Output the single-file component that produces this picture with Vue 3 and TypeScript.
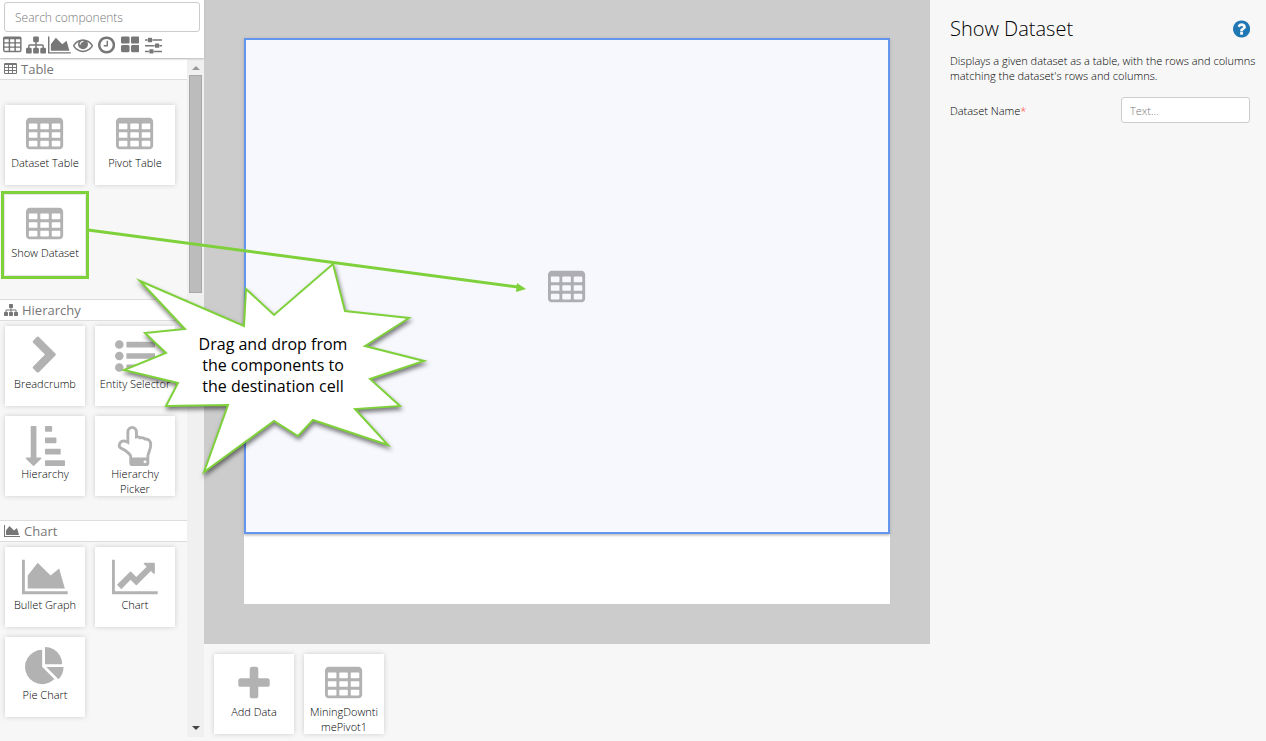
<script setup lang="ts">
import { ref } from 'vue'

interface Icon { x: number; w: number; d: string }
interface Tile { label: string; icon: string; active?: boolean }
interface Section { title: string; icon: string; spaced?: boolean; tiles: Tile[] }

const cell = (x: number, y: number): string =>
  `M${x + 32} ${y}h320q32 0 32 32v192q0 32-32 32h-320q-32 0-32-32v-192q0-32 32-32z`

const tableCells = [384, 768, 1152].map(y => [192, 704, 1216].map(x => cell(x, y)).join('')).join('')

const icons: Record<string, Icon> = {
  table: { x: 64, w: 1664, d: 'M224 128h1344q66 0 113 47t47 113v1088q0 66-47 113t-113 47h-1344q-66 0-113-47t-47-113v-1088q0-66 47-113t113-47z' + tableCells },
  sitemap: { x: 0, w: 1792, d: 'M1792 1248v320q0 40-28 68t-68 28h-320q-40 0-68-28t-28-68v-320q0-40 28-68t68-28h96v-192h-512v192h96q40 0 68 28t28 68v320q0 40-28 68t-68 28h-320q-40 0-68-28t-28-68v-320q0-40 28-68t68-28h96v-192h-512v192h96q40 0 68 28t28 68v320q0 40-28 68t-68 28h-320q-40 0-68-28t-28-68v-320q0-40 28-68t68-28h96v-192q0-52 38-90t90-38h512v-192h-96q-40 0-68-28t-28-68v-320q0-40 28-68t68-28h320q40 0 68 28t28 68v320q0 40-28 68t-68 28h-96v192h512q52 0 90 38t38 90v192h96q40 0 68 28t28 68z' },
  area: { x: 0, w: 2048, d: 'M2048 1536v128h-2048v-1536h128v1408h1920zm-384-1024l256 896h-1664v-576l448-576 576 576z' },
  eye: { x: 0, w: 1792, d: 'M1664 960q-152-236-381-353 61 104 61 225 0 185-131.5 316.5t-316.5 131.5-316.5-131.5-131.5-316.5q0-121 61-225-229 117-381 353 133 205 333.5 326.5t434.5 121.5 434.5-121.5 333.5-326.5zm-720-384q0-20-14-34t-34-14q-125 0-214.5 89.5t-89.5 214.5q0 20 14 34t34 14 34-14 14-34q0-86 61-147t147-61q20 0 34-14t14-34zm848 384q0 34-20 69-140 230-376.5 368.5t-499.5 138.5-499.5-139-376.5-368q-20-35-20-69t20-69q140-229 376.5-368t499.5-139 499.5 139 376.5 368q20 35 20 69z' },
  clock: { x: 128, w: 1536, d: 'M1024 544v448q0 14-9 23t-23 9h-320q-14 0-23-9t-9-23v-64q0-14 9-23t23-9h224v-352q0-14 9-23t23-9h64q14 0 23 9t9 23zm416 352q0-148-73-273t-198-198-273-73-273 73-198 198-73 273 73 273 198 198 273 73 273-73 198-198 73-273zm224 0q0 209-103 385.5t-279.5 279.5-385.5 103-385.5-103-279.5-279.5-103-385.5 103-385.5 279.5-279.5 385.5-103 385.5 103 279.5 279.5 103 385.5z' },
  blocks: { x: 64, w: 1664, d: 'M832 1024v384q0 52-38 90t-90 38h-512q-52 0-90-38t-38-90v-384q0-52 38-90t90-38h512q52 0 90 38t38 90zm0-768v384q0 52-38 90t-90 38h-512q-52 0-90-38t-38-90v-384q0-52 38-90t90-38h512q52 0 90 38t38 90zm896 768v384q0 52-38 90t-90 38h-512q-52 0-90-38t-38-90v-384q0-52 38-90t90-38h512q52 0 90 38t38 90zm0-768v384q0 52-38 90t-90 38h-512q-52 0-90-38t-38-90v-384q0-52 38-90t90-38h512q52 0 90 38t38 90z' },
  sliders: { x: 128, w: 1536, d: 'M480 1408v128h-352v-128h352zm352-128q26 0 45 19t19 45v256q0 26-19 45t-45 19h-256q-26 0-45-19t-19-45v-256q0-26 19-45t45-19h256zm160-384v128h-864v-128h864zm-640-512v128h-224v-128h224zm1312 1024v128h-736v-128h736zm-960-1152q26 0 45 19t19 45v256q0 26-19 45t-45 19h-256q-26 0-45-19t-19-45v-256q0-26 19-45t45-19h256zm640 512q26 0 45 19t19 45v256q0 26-19 45t-45 19h-256q-26 0-45-19t-19-45v-256q0-26 19-45t45-19h256zm320 128v128h-224v-128h224zm0-512v128h-864v-128h864z' },
  chevron: { x: 0, w: 1792, d: 'M1363 877l-742 742q-19 19-45 19t-45-19l-166-166q-19-19-19-45t19-45l531-531-531-531q-19-19-19-45t19-45l166-166q19-19 45-19t45 19l742 742q19 19 19 45t-19 45z' },
  list: { x: 0, w: 1792, d: 'M384 1408q0 80-56 136t-136 56-136-56-56-136 56-136 136-56 136 56 56 136zm0-512q0 80-56 136t-136 56-136-56-56-136 56-136 136-56 136 56 56 136zm1408 416v192q0 13-9.5 22.5t-22.5 9.5h-1216q-13 0-22.5-9.5t-9.5-22.5v-192q0-13 9.5-22.5t22.5-9.5h1216q13 0 22.5 9.5t9.5 22.5zm-1408-928q0 80-56 136t-136 56-136-56-56-136 56-136 136-56 136 56 56 136zm1408 416v192q0 13-9.5 22.5t-22.5 9.5h-1216q-13 0-22.5-9.5t-9.5-22.5v-192q0-13 9.5-22.5t22.5-9.5h1216q13 0 22.5 9.5t9.5 22.5zm0-512v192q0 13-9.5 22.5t-22.5 9.5h-1216q-13 0-22.5-9.5t-9.5-22.5v-192q0-13 9.5-22.5t22.5-9.5h1216q13 0 22.5 9.5t9.5 22.5z' },
  sort: { x: 0, w: 1792, d: 'M736 1440q0 12-10 24l-319 319q-10 9-23 9-12 0-23-9l-320-320q-15-16-7-35 8-20 30-20h192v-1376q0-14 9-23t23-9h192q14 0 23 9t9 23v1376h192q14 0 23 9t9 23zm1056 128v192q0 14-9 23t-23 9h-832q-14 0-23-9t-9-23v-192q0-14 9-23t23-9h832q14 0 23 9t9 23zm-192-512v192q0 14-9 23t-23 9h-640q-14 0-23-9t-9-23v-192q0-14 9-23t23-9h640q14 0 23 9t9 23zm-192-512v192q0 14-9 23t-23 9h-448q-14 0-23-9t-9-23v-192q0-14 9-23t23-9h448q14 0 23 9t9 23zm-192-512v192q0 14-9 23t-23 9h-256q-14 0-23-9t-9-23v-192q0-14 9-23t23-9h256q14 0 23 9t9 23z' },
  hand: { x: 0, w: 1792, d: 'M1408 1600q0-26-19-45t-45-19-45 19-19 45 19 45 45 19 45-19 19-45zm128-764q0-189-167-189-26 0-56 5-16-30-52.5-47.5t-73.5-17.5-69 18q-50-53-119-53-25 0-55.5 10t-47.5 25v-331q0-52-38-90t-90-38q-51 0-89.5 39t-38.5 89v576q-20 0-48.5-15t-55-33-68-33-84.5-15q-67 0-97.5 44.5t-30.5 115.5q0 24 139 90 44 24 65 37 64 40 145 112 81 71 106 101 57 69 57 140v32h640v-32q0-72 32-167t64-193.5 32-179.5zm128-5q0 133-69 322-59 164-59 223v288q0 53-37.5 90.5t-90.5 37.5h-640q-53 0-90.5-37.5t-37.5-90.5v-288q0-10-4.5-21.5t-14-23.5-18-22.5-22.5-24-21.5-20.5-21.5-19-17-14q-74-65-129-100-21-13-62-33t-72-37-63-40.5-49.5-55-17.5-69.5q0-125 67-206.5t189-81.5q68 0 128 22v-374q0-104 77-180t179-76q105 0 181 75.5t76 180.5v169q62 4 119 37 21-3 43-3 101 0 178 60 139-1 219.5 85t80.5 227z' },
  line: { x: 0, w: 2048, d: 'M2048 1536v128h-2048v-1536h128v1408h1920zm-128-1248v435q0 21-19.5 29.5t-35.5-7.5l-121-121-633 633q-10 10-23 10t-23-10l-233-233-416 416-192-192 585-585q10-10 23-10t23 10l233 233 464-464-121-121q-16-16-7.5-35.5t29.5-19.5h435q14 0 23 9t9 23z' },
  pie: { x: 0, w: 1792, d: 'M768 890l546 546q-106 108-247.5 168t-298.5 60q-209 0-385.5-103t-279.5-279.5-103-385.5 103-385.5 279.5-279.5 385.5-103v762zm187 6h773q0 157-60 298.5t-168 247.5zm709-128h-768v-768q209 0 385.5 103t279.5 279.5 103 385.5z' },
  plus: { x: 0, w: 1792, d: 'M1600 736v192q0 40-28 68t-68 28h-416v416q0 40-28 68t-68 28h-192q-40 0-68-28t-28-68v-416h-416q-40 0-68-28t-28-68v-192q0-40 28-68t68-28h416v-416q0-40 28-68t68-28h192q40 0 68 28t28 68v416h416q40 0 68 28t28 68z' },
  help: { x: 128, w: 1536, d: 'M1024 1376v-192q0-14-9-23t-23-9h-192q-14 0-23 9t-9 23v192q0 14 9 23t23 9h192q14 0 23-9t9-23zm256-672q0-88-55.5-163t-138.5-116-170-41q-243 0-371 213-15 24 8 42l132 100q7 6 19 6 16 0 25-12 53-68 86-92 34-24 86-24 48 0 85.5 26t37.5 59q0 38-20 61t-68 45q-63 28-115.5 86.5t-52.5 125.5v36q0 14 9 23t23 9h192q14 0 23-9t9-23q0-19 21.5-49.5t54.5-49.5q32-18 49-28.5t46-35 44.5-48 28-60.5 12.5-81zm384 192q0 209-103 385.5t-279.5 279.5-385.5 103-385.5-103-279.5-279.5-103-385.5 103-385.5 279.5-279.5 385.5-103 385.5 103 279.5 279.5 103 385.5z' },
}

const box = (name: string): string => `${icons[name].x} 0 ${icons[name].w} 1792`

const filters = [
  { icon: 'table', label: 'Table' },
  { icon: 'sitemap', label: 'Hierarchy' },
  { icon: 'area', label: 'Chart' },
  { icon: 'eye', label: 'Visualisation' },
  { icon: 'clock', label: 'Time' },
  { icon: 'blocks', label: 'Layout' },
  { icon: 'sliders', label: 'Controls' },
]

const sections: Section[] = [
  {
    title: 'Table', icon: 'table', spaced: true,
    tiles: [
      { label: 'Dataset Table', icon: 'table' },
      { label: 'Pivot Table', icon: 'table' },
      { label: 'Show Dataset', icon: 'table', active: true },
    ],
  },
  {
    title: 'Hierarchy', icon: 'sitemap',
    tiles: [
      { label: 'Breadcrumb', icon: 'chevron' },
      { label: 'Entity Selector', icon: 'list' },
      { label: 'Hierarchy', icon: 'sort' },
      { label: 'Hierarchy Picker', icon: 'hand' },
    ],
  },
  {
    title: 'Chart', icon: 'area',
    tiles: [
      { label: 'Bullet Graph', icon: 'area' },
      { label: 'Chart', icon: 'line' },
      { label: 'Pie Chart', icon: 'pie' },
    ],
  },
]

const dataTiles: Tile[] = [
  { label: 'Add Data', icon: 'plus' },
  { label: 'MiningDowntimePivot1', icon: 'table' },
]

const search = ref('')
const datasetName = ref('')
</script>

<template>
  <div class="designer">
    <aside class="sidebar">
      <div class="finder">
        <input v-model="search" class="field search" type="text" placeholder="Search components" aria-label="Search components">
        <nav class="filters">
          <button v-for="f in filters" :key="f.icon" type="button" class="filter" :aria-label="f.label">
            <svg class="icon" :viewBox="box(f.icon)"><path :d="icons[f.icon].d" /></svg>
          </button>
        </nav>
      </div>
      <div class="library">
        <div class="sections">
          <section v-for="s in sections" :key="s.title" class="section">
            <h2 class="section-title">
              <svg class="icon" :viewBox="box(s.icon)"><path :d="icons[s.icon].d" /></svg>
              <span>{{ s.title }}</span>
            </h2>
            <div class="tiles" :class="{ spaced: s.spaced }">
              <button v-for="t in s.tiles" :key="t.label" type="button" class="tile" :class="{ active: t.active }">
                <svg class="icon" :viewBox="box(t.icon)"><path :d="icons[t.icon].d" /></svg>
                <span class="label">{{ t.label }}</span>
              </button>
            </div>
          </section>
        </div>
        <div class="scrollbar" aria-hidden="true">
          <svg class="arrow up" viewBox="0 0 8 4"><path d="M0 4l4-4 4 4z" /></svg>
          <div class="thumb"></div>
          <svg class="arrow down" viewBox="0 0 8 4"><path d="M0 0h8l-4 4z" /></svg>
        </div>
      </div>
    </aside>

    <main class="workspace">
      <div class="canvas">
        <div class="page">
          <div class="drop-cell">
            <svg class="icon" :viewBox="box('table')"><path :d="icons.table.d" /></svg>
          </div>
          <div class="blank-cell"></div>
        </div>
      </div>
      <div class="tray">
        <button v-for="t in dataTiles" :key="t.label" type="button" class="tile">
          <svg class="icon" :viewBox="box(t.icon)"><path :d="icons[t.icon].d" /></svg>
          <span class="label">{{ t.label }}</span>
        </button>
      </div>
    </main>

    <aside class="properties">
      <header class="properties-head">
        <h1>Show Dataset</h1>
        <button type="button" class="help" aria-label="Help">
          <svg class="icon" :viewBox="box('help')"><path :d="icons.help.d" /></svg>
        </button>
      </header>
      <p class="description">Displays a given dataset as a table, with the rows and columns matching the dataset's rows and columns.</p>
      <div class="property">
        <label for="dataset-name">Dataset Name<span class="required">*</span></label>
        <input id="dataset-name" v-model="datasetName" class="field" type="text" placeholder="Text...">
      </div>
    </aside>

    <svg class="annotation" width="540" height="500" viewBox="0 0 540 500" aria-hidden="true">
      <path
        class="burst"
        d="M140 281L244 326L246 289L274 315L333 264L345 311L409 318L365 346L424 361L370 379L400 406L355 409L388 445L313 420L298 436L274 421L204 472L228 405L166 406L178 383L124 370L166 353L145 333L185 329Z"
      />
      <path class="pointer" d="M88 230L518 287" />
      <path class="pointer-head" d="M517 283L526 289L516 292Z" />
    </svg>
    <p class="callout">Drag and drop from<br>the components to<br>the destination cell</p>
  </div>
</template>

<style>
body {
  margin: 0;
  background: #f7f7f7;
}
</style>

<style scoped>
.designer {
  position: relative;
  display: grid;
  grid-template-columns: 204px 1fr 336px;
  min-height: 100vh;
  background: #f7f7f7;
  color: #000;
  font: 350 11px/15px "Open Sans", "Noto Sans", sans-serif;
}

.designer * {
  box-sizing: border-box;
}

button {
  padding: 0;
  border: 0;
  background: none;
  color: inherit;
  font: inherit;
  cursor: pointer;
}

.icon {
  display: block;
  flex: none;
  fill: currentColor;
  fill-rule: evenodd;
}

.field {
  width: 100%;
  min-width: 0;
  border: 1px solid #ccc;
  border-radius: 3px;
  background: #fff;
  color: #333;
  font: inherit;
}

.field::placeholder {
  color: #777;
  opacity: 1;
}

.sidebar {
  display: flex;
  flex-direction: column;
  padding-bottom: 4px;
}

.finder {
  position: relative;
  height: 58px;
  padding: 2px 4px 0;
  background: #fff;
  box-shadow: 0 1px 2px #bbb;
}

.search {
  display: block;
  height: 30px;
  padding: 0 10px;
  font-size: 12px;
}

.filters {
  display: flex;
  width: 164px;
  padding-top: 3px;
  margin-left: -3px;
  color: #777;
}

.filter {
  display: flex;
  flex: 1;
  justify-content: center;
}

.filters .icon {
  height: 20px;
}

.library {
  display: flex;
  flex: 1;
}

.sections {
  flex: 1;
}

.section-title {
  display: flex;
  align-items: center;
  gap: 4px;
  height: 22px;
  margin: 0;
  padding: 0 4px;
  border: solid #ddd;
  border-width: 1px 0;
  background: #fff;
  color: #777;
  font-size: 13px;
  font-weight: 400;
  line-height: 20px;
}

.section-title .icon {
  height: 14px;
}

.tiles {
  display: flex;
  flex-wrap: wrap;
  gap: 10px;
  padding: 5px 5px 24px;
}

.tiles.spaced {
  padding-top: 25px;
}

.section:last-child .tiles {
  padding-bottom: 10px;
}

.tile {
  display: flex;
  flex-direction: column;
  align-items: center;
  width: 80px;
  height: 80px;
  padding: 10px 4px 0;
  background: #fff;
  box-shadow: 0 0 5px #ccc;
}

.tile.active {
  outline: 3px solid #7fd13b;
  outline-offset: 1px;
}

.tile .icon {
  height: 40px;
  color: #b2b2b2;
}

.label {
  max-width: 100%;
  overflow-wrap: anywhere;
}

.scrollbar {
  display: flex;
  flex-direction: column;
  align-items: center;
  width: 17px;
  padding: 8px 2px 7px;
  background: #f0f0f0;
}

.arrow {
  width: 8px;
  height: 4px;
}

.up {
  fill: #999;
}

.down {
  margin-top: auto;
  fill: #444;
}

.thumb {
  width: 13px;
  height: 218px;
  margin-top: 5px;
  border: 1px solid #a8a8a8;
  background: #bcbcbc;
}

.workspace {
  display: flex;
  flex-direction: column;
  min-width: 0;
}

.canvas {
  display: flex;
  flex: 1;
  padding: 38px 40px 40px;
  background: #ccc;
}

.page {
  display: flex;
  flex: 1;
  flex-direction: column;
  background: #fff;
}

.drop-cell {
  display: flex;
  flex: 1;
  align-items: center;
  justify-content: center;
  padding-top: 3px;
  border: 2px solid #6495ed;
  background: #f7f8fe;
  box-shadow: 0 1px 3px #aaa;
  color: #aeaeb2;
}

.drop-cell .icon {
  height: 40px;
}

.blank-cell {
  height: 70px;
}

.tray {
  display: flex;
  gap: 10px;
  height: 97px;
  padding: 10px;
}

.properties {
  padding: 16px 6px 0 20px;
}

.properties-head {
  display: flex;
  align-items: center;
  justify-content: space-between;
  height: 26px;
  padding-right: 10px;
}

h1 {
  margin: 0;
  font-size: 20px;
  font-weight: 300;
  line-height: 26px;
}

.help {
  height: 22px;
  color: #1f77b4;
}

.help .icon {
  height: 20px;
}

.description {
  margin: 11px 0 14px;
}

.property {
  display: grid;
  grid-template-columns: 1fr 129px;
  align-items: center;
  padding-right: 10px;
}

.property .field {
  height: 26px;
  padding: 0 8px;
}

.required {
  color: #f33;
}

.annotation {
  position: absolute;
  top: 0;
  left: 0;
  pointer-events: none;
}

.burst {
  fill: #fff;
  stroke: #7fd13b;
  stroke-width: 2;
  stroke-miterlimit: 10;
  filter: drop-shadow(1px 3px 2px rgba(0, 0, 0, 0.5));
}

.pointer {
  fill: none;
  stroke: #7fd13b;
  stroke-width: 3;
}

.pointer-head {
  fill: #7fd13b;
}

.callout {
  position: absolute;
  top: 334px;
  left: 193px;
  width: 160px;
  margin: 0;
  font-size: 16px;
  font-weight: 500;
  line-height: 21px;
  text-align: center;
}
</style>
